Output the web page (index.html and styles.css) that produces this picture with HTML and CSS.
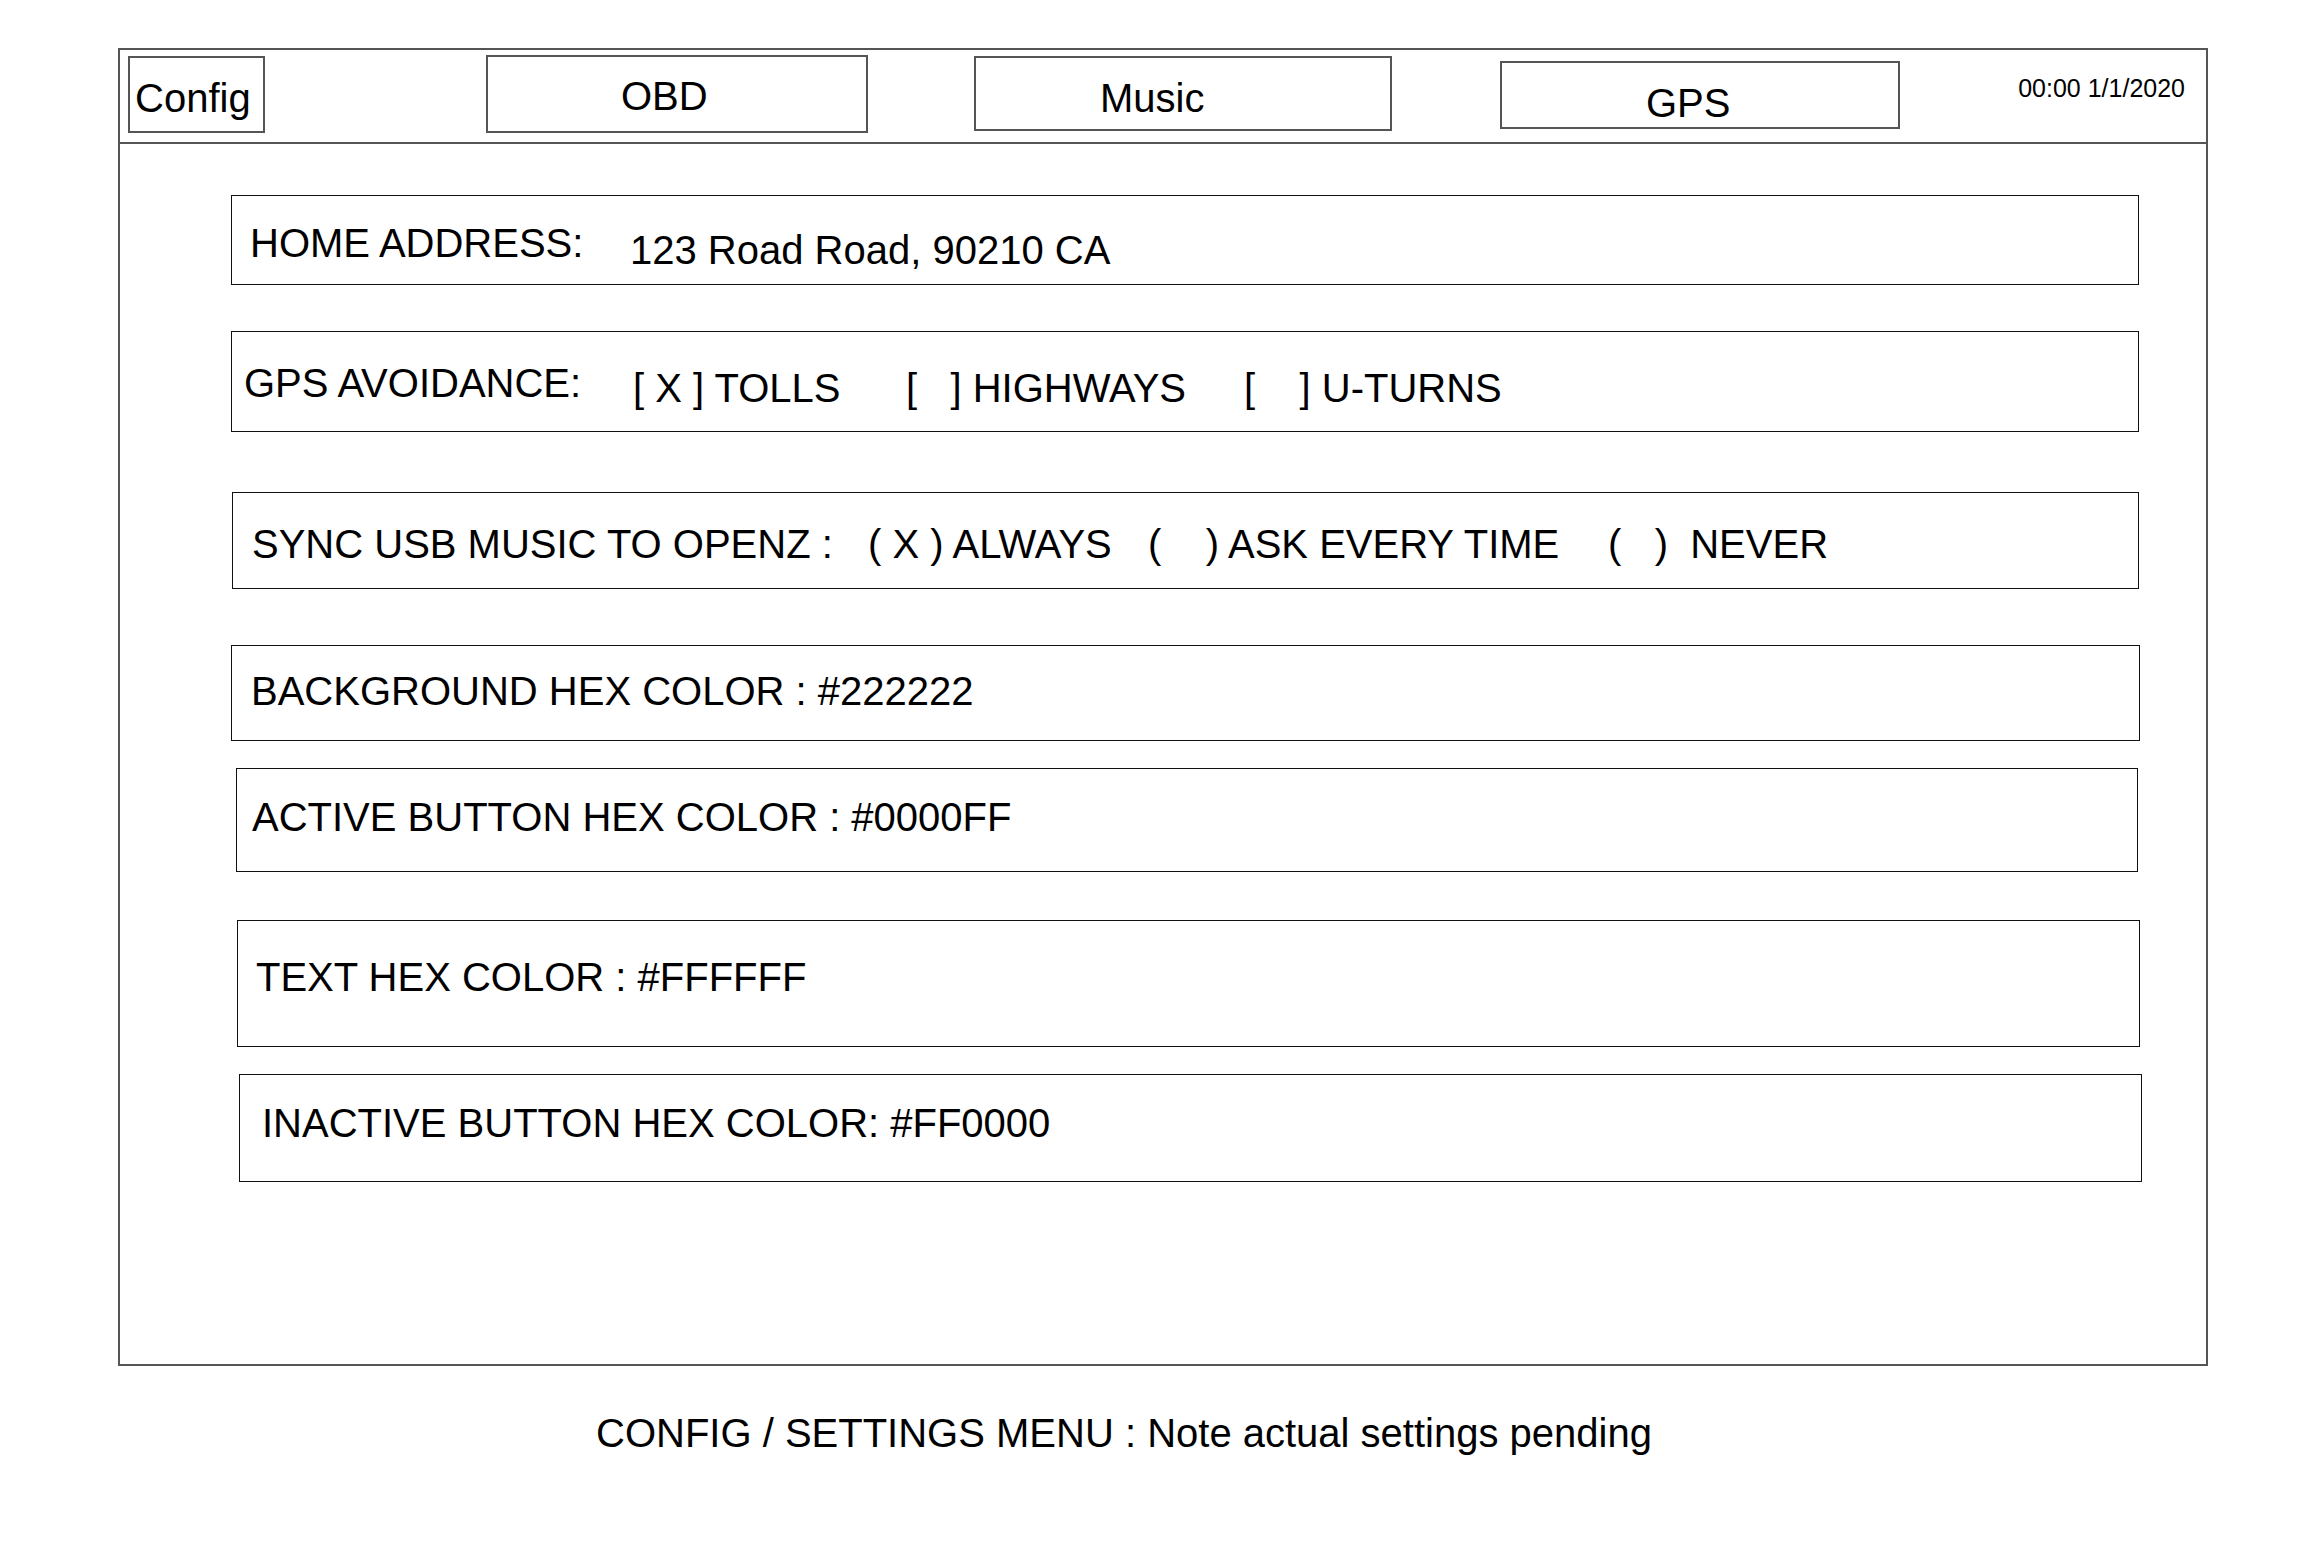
FILE: index.html
```html
<!DOCTYPE html>
<html>
<head>
<meta charset="utf-8">
<title>Config / Settings Menu</title>
<link rel="stylesheet" href="styles.css">
</head>
<body>
<div class="frame">
  <div class="header">
    <div class="tab tab-config">Config</div>
    <div class="tab tab-obd">OBD</div>
    <div class="tab tab-music">Music</div>
    <div class="tab tab-gps">GPS</div>
    <div class="clock">00:00 1/1/2020</div>
  </div>
  <div class="settings">
    <div class="row row-home">
      <span class="label label-home">HOME ADDRESS:</span>
      <span class="value value-home">123 Road Road, 90210 CA</span>
    </div>
    <div class="row row-gps">
      <span class="label label-gps">GPS AVOIDANCE:</span>
      <span class="opt opt-tolls">[ X ] TOLLS</span>
      <span class="opt opt-highways">[   ] HIGHWAYS</span>
      <span class="opt">[    ] U-TURNS</span>
    </div>
    <div class="row row-sync">
      <span class="label label-sync">SYNC USB MUSIC TO OPENZ :</span>
      <span class="opt opt-always">( X ) ALWAYS</span>
      <span class="opt opt-ask">(    ) ASK EVERY TIME</span>
      <span class="opt">(   )  NEVER</span>
    </div>
    <div class="row row-bg"><span class="label">BACKGROUND HEX COLOR : #222222</span></div>
    <div class="row row-active"><span class="label">ACTIVE BUTTON HEX COLOR : #0000FF</span></div>
    <div class="row row-text"><span class="label">TEXT HEX COLOR : #FFFFFF</span></div>
    <div class="row row-inactive"><span class="label">INACTIVE BUTTON HEX COLOR: #FF0000</span></div>
  </div>
</div>
<div class="caption">CONFIG / SETTINGS MENU : Note actual settings pending</div>
</body>
</html>
```

FILE: styles.css
```css
* {
  box-sizing: border-box;
}

html, body {
  margin: 0;
  padding: 0;
  background: #ffffff;
}

body {
  width: 2308px;
  height: 1550px;
  overflow: hidden;
  font-family: "Liberation Sans", Arial, sans-serif;
  font-size: 40px;
  line-height: 40px;
  color: #000000;
}

.frame {
  margin-left: 118px;
  margin-top: 48px;
  width: 2090px;
  height: 1318px;
  border: 2px solid #555555;
  display: flex;
  flex-direction: column;
}

.header {
  height: 94px;
  border-bottom: 2px solid #555555;
  display: flex;
  align-items: flex-start;
  flex: none;
}

.tab {
  flex: none;
  border: 2px solid #555555;
  white-space: nowrap;
}

.tab-config {
  margin-left: 8px;
  margin-top: 6px;
  width: 137px;
  height: 77px;
  padding-left: 5px;
  padding-top: 20px;
}

.tab-obd {
  margin-left: 221px;
  margin-top: 5px;
  width: 382px;
  height: 78px;
  padding-left: 133px;
  padding-top: 19px;
}

.tab-music {
  margin-left: 106px;
  margin-top: 6px;
  width: 418px;
  height: 75px;
  padding-left: 124px;
  padding-top: 20px;
}

.tab-gps {
  margin-left: 108px;
  margin-top: 11px;
  width: 400px;
  height: 68px;
  padding-left: 144px;
  padding-top: 20px;
}

.clock {
  margin-left: auto;
  margin-right: 21px;
  margin-top: 26px;
  font-size: 25px;
  line-height: 25px;
  white-space: nowrap;
}

.settings {
  display: flex;
  flex-direction: column;
  align-items: flex-start;
}

.row {
  flex: none;
  border: 1px solid #111111;
  display: flex;
  align-items: flex-start;
}

.label, .value, .opt {
  flex: none;
  white-space: pre;
}

/* HOME ADDRESS */
.row-home {
  margin-left: 111px;
  margin-top: 51px;
  width: 1908px;
  height: 90px;
  padding-left: 18px;
  padding-top: 27px;
}
.label-home { width: 380px; }
.value-home { margin-top: 7px; }

/* GPS AVOIDANCE */
.row-gps {
  margin-left: 111px;
  margin-top: 46px;
  width: 1908px;
  height: 101px;
  padding-left: 12px;
  padding-top: 31px;
}
.label-gps { width: 389px; }
.row-gps .opt { margin-top: 5px; }
.opt-tolls { width: 273px; }
.opt-highways { width: 338px; }

/* SYNC */
.row-sync {
  margin-left: 112px;
  margin-top: 60px;
  width: 1907px;
  height: 97px;
  padding-left: 19px;
  padding-top: 31px;
}
.label-sync { width: 616px; }
.opt-always { width: 280px; }
.opt-ask { width: 460px; }

.row-bg {
  margin-left: 111px;
  margin-top: 56px;
  width: 1909px;
  height: 96px;
  padding-left: 19px;
  padding-top: 25px;
}

.row-active {
  margin-left: 116px;
  margin-top: 27px;
  width: 1902px;
  height: 104px;
  padding-left: 15px;
  padding-top: 28px;
}

.row-text {
  margin-left: 117px;
  margin-top: 48px;
  width: 1903px;
  height: 127px;
  padding-left: 18px;
  padding-top: 36px;
}

.row-inactive {
  margin-left: 119px;
  margin-top: 27px;
  width: 1903px;
  height: 108px;
  padding-left: 22px;
  padding-top: 28px;
}

.caption {
  margin-top: 47px;
  padding-left: 596px;
  white-space: nowrap;
}
```
